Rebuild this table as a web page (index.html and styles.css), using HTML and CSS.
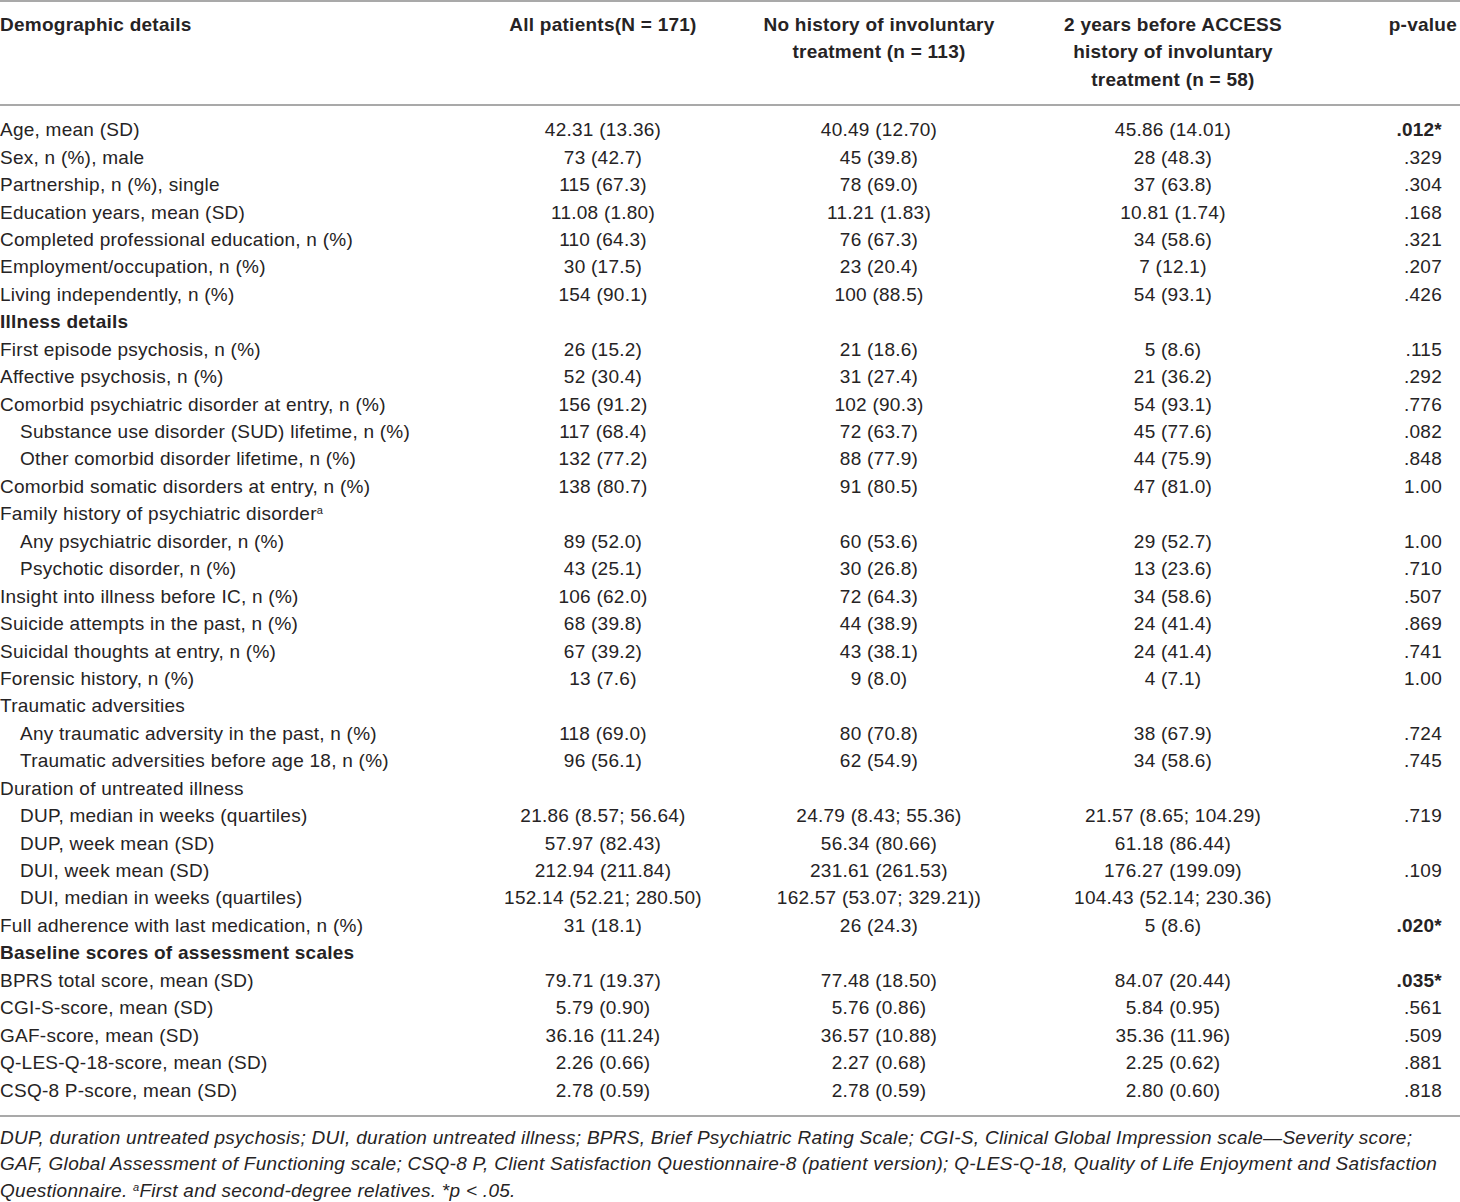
FILE: index.html
```html
<!DOCTYPE html>
<html lang="en">
<head>
<meta charset="utf-8">
<title>Demographic details</title>
<link rel="stylesheet" href="styles.css">
</head>
<body>
<table class="tbl">
  <colgroup>
    <col class="c1"><col class="c2"><col class="c3"><col class="c4"><col class="c5">
  </colgroup>
  <thead>
    <tr>
      <th class="lbl">Demographic details</th>
      <th>All patients(N = 171)</th>
      <th>No history of involuntary<br>treatment (n = 113)</th>
      <th>2 years before ACCESS<br>history of involuntary<br>treatment (n = 58)</th>
      <th class="pv">p-value</th>
    </tr>
  </thead>
  <tbody>
    <tr class="first"><td class="lbl">Age, mean (SD)</td><td>42.31 (13.36)</td><td>40.49 (12.70)</td><td>45.86 (14.01)</td><td class="pv"><b>.012*</b></td></tr>
    <tr><td class="lbl">Sex, n (%), male</td><td>73 (42.7)</td><td>45 (39.8)</td><td>28 (48.3)</td><td class="pv">.329</td></tr>
    <tr><td class="lbl">Partnership, n (%), single</td><td>115 (67.3)</td><td>78 (69.0)</td><td>37 (63.8)</td><td class="pv">.304</td></tr>
    <tr><td class="lbl">Education years, mean (SD)</td><td>11.08 (1.80)</td><td>11.21 (1.83)</td><td>10.81 (1.74)</td><td class="pv">.168</td></tr>
    <tr><td class="lbl">Completed professional education, n (%)</td><td>110 (64.3)</td><td>76 (67.3)</td><td>34 (58.6)</td><td class="pv">.321</td></tr>
    <tr><td class="lbl">Employment/occupation, n (%)</td><td>30 (17.5)</td><td>23 (20.4)</td><td>7 (12.1)</td><td class="pv">.207</td></tr>
    <tr><td class="lbl">Living independently, n (%)</td><td>154 (90.1)</td><td>100 (88.5)</td><td>54 (93.1)</td><td class="pv">.426</td></tr>
    <tr><td class="lbl sec">Illness details</td><td></td><td></td><td></td><td class="pv"></td></tr>
    <tr><td class="lbl">First episode psychosis, n (%)</td><td>26 (15.2)</td><td>21 (18.6)</td><td>5 (8.6)</td><td class="pv">.115</td></tr>
    <tr><td class="lbl">Affective psychosis, n (%)</td><td>52 (30.4)</td><td>31 (27.4)</td><td>21 (36.2)</td><td class="pv">.292</td></tr>
    <tr><td class="lbl">Comorbid psychiatric disorder at entry, n (%)</td><td>156 (91.2)</td><td>102 (90.3)</td><td>54 (93.1)</td><td class="pv">.776</td></tr>
    <tr><td class="lbl ind">Substance use disorder (SUD) lifetime, n (%)</td><td>117 (68.4)</td><td>72 (63.7)</td><td>45 (77.6)</td><td class="pv">.082</td></tr>
    <tr><td class="lbl ind">Other comorbid disorder lifetime, n (%)</td><td>132 (77.2)</td><td>88 (77.9)</td><td>44 (75.9)</td><td class="pv">.848</td></tr>
    <tr><td class="lbl">Comorbid somatic disorders at entry, n (%)</td><td>138 (80.7)</td><td>91 (80.5)</td><td>47 (81.0)</td><td class="pv">1.00</td></tr>
    <tr><td class="lbl">Family history of psychiatric disorder<sup>a</sup></td><td></td><td></td><td></td><td class="pv"></td></tr>
    <tr><td class="lbl ind">Any psychiatric disorder, n (%)</td><td>89 (52.0)</td><td>60 (53.6)</td><td>29 (52.7)</td><td class="pv">1.00</td></tr>
    <tr><td class="lbl ind">Psychotic disorder, n (%)</td><td>43 (25.1)</td><td>30 (26.8)</td><td>13 (23.6)</td><td class="pv">.710</td></tr>
    <tr><td class="lbl">Insight into illness before IC, n (%)</td><td>106 (62.0)</td><td>72 (64.3)</td><td>34 (58.6)</td><td class="pv">.507</td></tr>
    <tr><td class="lbl">Suicide attempts in the past, n (%)</td><td>68 (39.8)</td><td>44 (38.9)</td><td>24 (41.4)</td><td class="pv">.869</td></tr>
    <tr><td class="lbl">Suicidal thoughts at entry, n (%)</td><td>67 (39.2)</td><td>43 (38.1)</td><td>24 (41.4)</td><td class="pv">.741</td></tr>
    <tr><td class="lbl">Forensic history, n (%)</td><td>13 (7.6)</td><td>9 (8.0)</td><td>4 (7.1)</td><td class="pv">1.00</td></tr>
    <tr><td class="lbl">Traumatic adversities</td><td></td><td></td><td></td><td class="pv"></td></tr>
    <tr><td class="lbl ind">Any traumatic adversity in the past, n (%)</td><td>118 (69.0)</td><td>80 (70.8)</td><td>38 (67.9)</td><td class="pv">.724</td></tr>
    <tr><td class="lbl ind">Traumatic adversities before age 18, n (%)</td><td>96 (56.1)</td><td>62 (54.9)</td><td>34 (58.6)</td><td class="pv">.745</td></tr>
    <tr><td class="lbl">Duration of untreated illness</td><td></td><td></td><td></td><td class="pv"></td></tr>
    <tr><td class="lbl ind">DUP, median in weeks (quartiles)</td><td>21.86 (8.57; 56.64)</td><td>24.79 (8.43; 55.36)</td><td>21.57 (8.65; 104.29)</td><td class="pv">.719</td></tr>
    <tr><td class="lbl ind">DUP, week mean (SD)</td><td>57.97 (82.43)</td><td>56.34 (80.66)</td><td>61.18 (86.44)</td><td class="pv"></td></tr>
    <tr><td class="lbl ind">DUI, week mean (SD)</td><td>212.94 (211.84)</td><td>231.61 (261.53)</td><td>176.27 (199.09)</td><td class="pv">.109</td></tr>
    <tr><td class="lbl ind">DUI, median in weeks (quartiles)</td><td>152.14 (52.21; 280.50)</td><td>162.57 (53.07; 329.21))</td><td>104.43 (52.14; 230.36)</td><td class="pv"></td></tr>
    <tr><td class="lbl">Full adherence with last medication, n (%)</td><td>31 (18.1)</td><td>26 (24.3)</td><td>5 (8.6)</td><td class="pv"><b>.020*</b></td></tr>
    <tr><td class="lbl sec">Baseline scores of assessment scales</td><td></td><td></td><td></td><td class="pv"></td></tr>
    <tr><td class="lbl">BPRS total score, mean (SD)</td><td>79.71 (19.37)</td><td>77.48 (18.50)</td><td>84.07 (20.44)</td><td class="pv"><b>.035*</b></td></tr>
    <tr><td class="lbl">CGI-S-score, mean (SD)</td><td>5.79 (0.90)</td><td>5.76 (0.86)</td><td>5.84 (0.95)</td><td class="pv">.561</td></tr>
    <tr><td class="lbl">GAF-score, mean (SD)</td><td>36.16 (11.24)</td><td>36.57 (10.88)</td><td>35.36 (11.96)</td><td class="pv">.509</td></tr>
    <tr><td class="lbl">Q-LES-Q-18-score, mean (SD)</td><td>2.26 (0.66)</td><td>2.27 (0.68)</td><td>2.25 (0.62)</td><td class="pv">.881</td></tr>
    <tr class="last"><td class="lbl">CSQ-8 P-score, mean (SD)</td><td>2.78 (0.59)</td><td>2.78 (0.59)</td><td>2.80 (0.60)</td><td class="pv">.818</td></tr>
  </tbody>
</table>
<p class="note">DUP, duration untreated psychosis; DUI, duration untreated illness; BPRS, Brief Psychiatric Rating Scale; CGI-S, Clinical Global Impression scale—Severity score;<br>GAF, Global Assessment of Functioning scale; CSQ-8 P, Client Satisfaction Questionnaire-8 (patient version); Q-LES-Q-18, Quality of Life Enjoyment and Satisfaction<br>Questionnaire. <sup>a</sup>First and second-degree relatives. *<span class="np">p</span> &lt; .05.</p>
</body>
</html>
```

FILE: styles.css
```css
html, body {
  margin: 0;
  padding: 0;
  background: #ffffff;
}
body {
  font-family: "Liberation Sans", Arial, sans-serif;
  font-size: 19px;
  letter-spacing: 0.25px;
  color: #262324;
  width: 1460px;
}
.tbl {
  width: 1460px;
  border-collapse: collapse;
  table-layout: fixed;
  border-top: 2px solid #a9a9a9;
  border-bottom: 2px solid #a9a9a9;
}
.c1 { width: 480px; }
.c2 { width: 246px; }
.c3 { width: 306px; }
.c4 { width: 282px; }
.c5 { width: 146px; }
.tbl th {
  font-weight: bold;
  line-height: 27.4px;
  text-align: center;
  vertical-align: top;
  padding: 9px 0 11px 0;
  border-bottom: 2px solid #a9a9a9;
}
.tbl td {
  line-height: 27.43px;
  height: 27.43px;
  padding: 0;
  text-align: center;
  white-space: nowrap;
  vertical-align: middle;
}
.tbl .lbl { text-align: left; }
.tbl th.pv { text-align: right; padding-right: 3px; }
.tbl td.pv { text-align: right; padding-right: 18px; }
.tbl .sec { font-weight: bold; }
.tbl .ind { padding-left: 20px; }
.tbl tr.first td { padding-top: 10px; }
.tbl tr.last td { padding-bottom: 11px; }
sup {
  font-size: 11px;
  line-height: 0;
  vertical-align: 6px;
}
.note {
  margin: 8px 0 0 0;
  font-style: italic;
  font-size: 19px;
  letter-spacing: 0.28px;
  line-height: 26.5px;
  white-space: nowrap;
  color: #262324;
}
```
